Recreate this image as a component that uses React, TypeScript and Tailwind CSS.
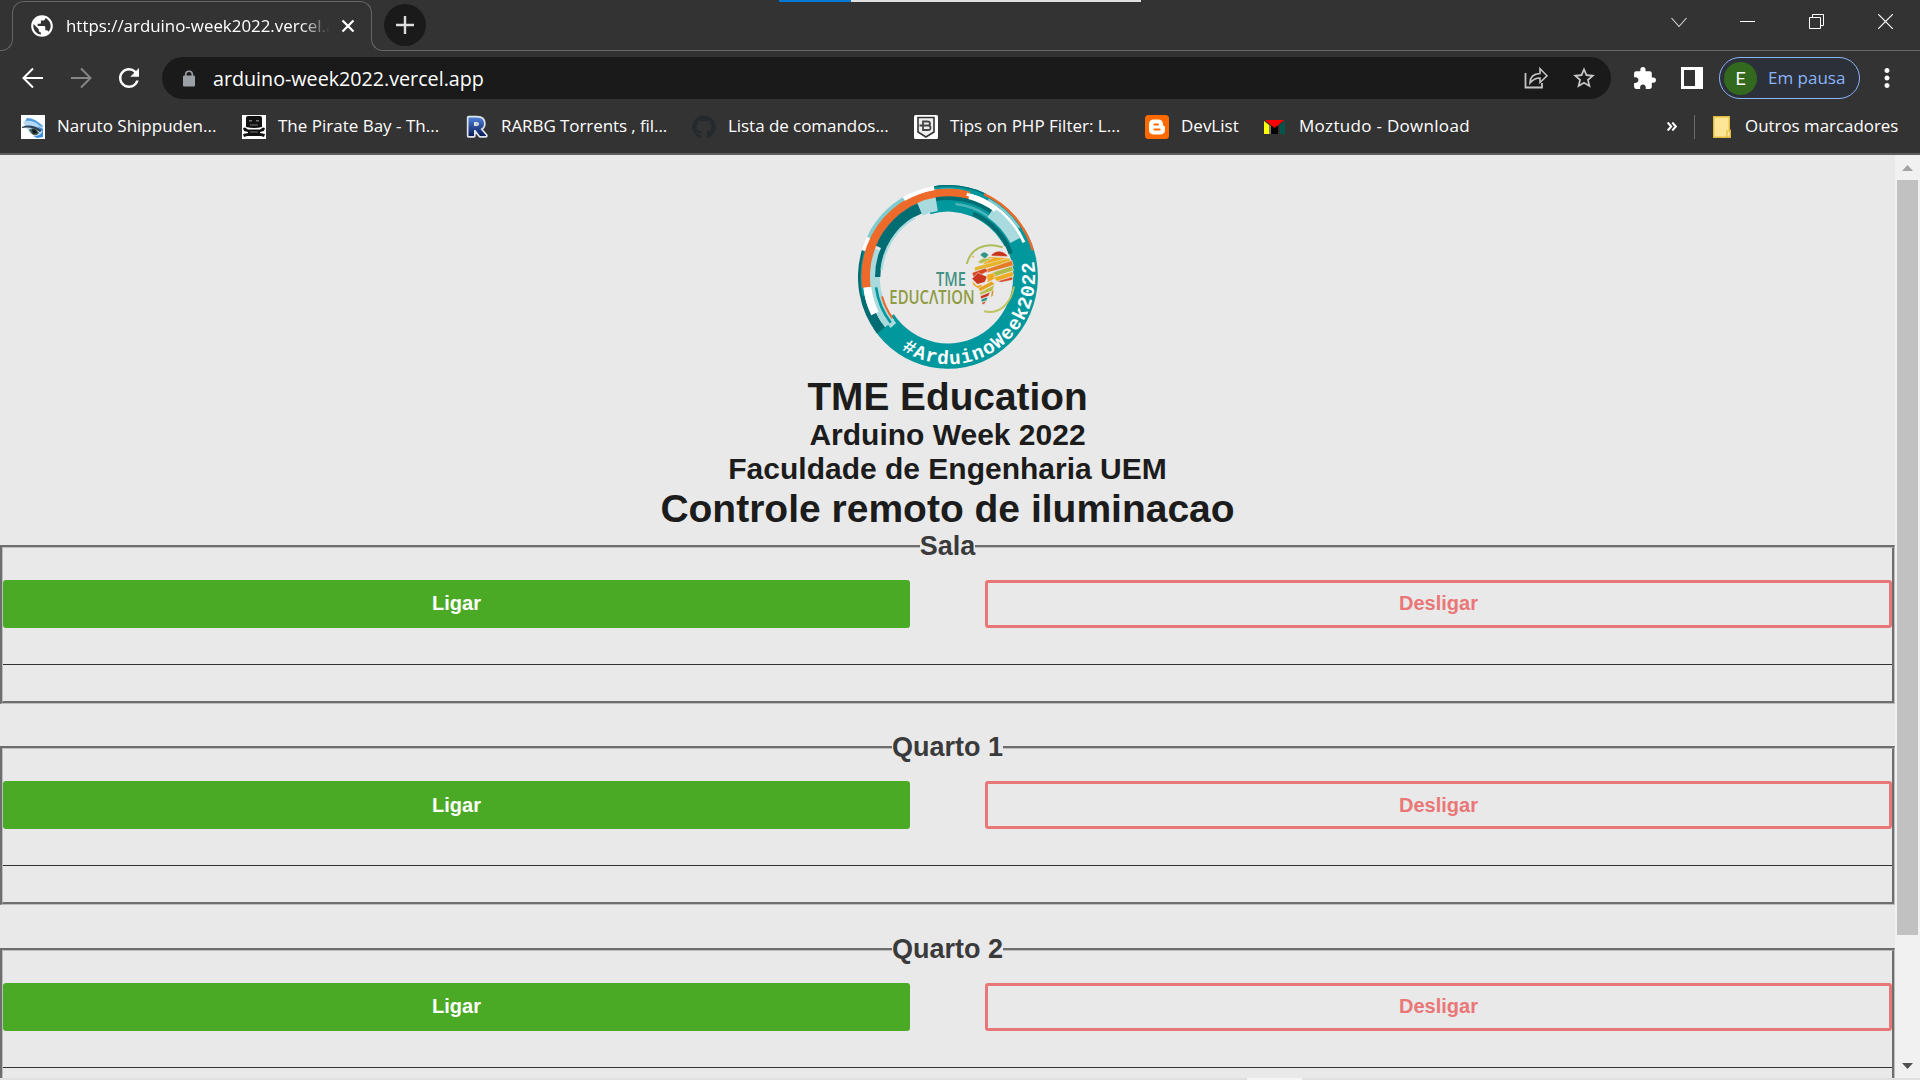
import React from 'react';
import { MdExtension, MdMoreVert, MdPublic, MdRefresh, MdStarBorder } from 'react-icons/md';
import { FaGithub } from 'react-icons/fa';

const RY = 1.022;

/** Closed ring segment; angles are degrees clockwise from twelve o'clock. */
function ring(from: number, to: number, inner: number, outer: number): string {
  const at = (deg: number, r: number) => {
    const a = (deg * Math.PI) / 180;
    return `${(324 + r * Math.sin(a)).toFixed(1)} ${(321 - r * RY * Math.cos(a)).toFixed(1)}`;
  };
  const large = to - from > 180 ? 1 : 0;
  return `M${at(from, outer)}A${outer} ${outer * RY} 0 ${large} 1 ${at(to, outer)}L${at(to, inner)}A${inner} ${inner * RY} 0 ${large} 0 ${at(from, inner)}Z`;
}

const TEAL = '#00979d';
const DARK = '#006d72';
const PALE = '#a9dade';
const MID = '#7fcbcd';
const ORANGE = '#ee6a2a';

const segments: [number, number, number, number, string][] = [
  [10, 62, 192, 268, TEAL],
  [58, 236, 196, 270, TEAL],
  [344, 418, 192, 246, TEAL],
  [232, 287, 256, 270, DARK],
  [232, 250, 240, 258, DARK],
  [258, 287, 256, 263, TEAL],
  [287, 296, 257, 270, '#ffffff'],
  [296, 330, 250, 270, MID],
  [232, 250, 205, 240, PALE],
  [246, 291, 204, 238, PALE],
  [229, 238, 206, 228, PALE],
  [232, 262, 214, 222, TEAL],
  [244, 263, 232, 256, '#ffffff'],
  [263, 375, 234, 260, ORANGE],
  [330, 351, 258, 270, '#ffffff'],
  [351, 384, 260, 270, TEAL],
  [351, 385, 266, 270, DARK],
  [293, 339, 213, 235, DARK],
  [270, 339, 203, 219, DARK],
  [276, 330, 197, 204, PALE],
  [337, 351, 196, 236, PALE],
  [351, 395, 226, 237, DARK],
  [6, 34, 212, 219, '#4db5b9'],
  [34, 62, 212, 246, PALE],
  [22, 70, 194, 207, DARK],
  [375, 396, 237, 254, '#ffffff'],
  [13, 66, 245, 254, '#ffffff'],
  [28, 56, 254, 261, MID],
  [24, 73, 263, 270, ORANGE],
  [234, 254, 203, 209, ORANGE],
];

function Logo() {
  return (
    <svg className="h-[184px] w-[180px]" viewBox="54 45 540 552" preserveAspectRatio="none">
      {segments.map(([a, b, i, o, fill], n) => (
        <path key={n} d={ring(a, b, i, o)} fill={fill} />
      ))}
      <path id="baseline" d="M185 538 A257 262.6 0 0 0 573 240" fill="none" />
      <text fill="#fff" fontSize="58" letterSpacing="3.300" fontFamily="'Liberation Mono', monospace">
        <textPath href="#baseline">#ArduinoWeek2022</textPath>
      </text>
      <g fontFamily="'Open Sans', sans-serif" fontSize="57" fontWeight="600">
        <text x="288" y="347" fill="#429183" textLength="90" lengthAdjust="spacingAndGlyphs">TME</text>
        <text x="148" y="403" fill="#8f9c43" textLength="256" lengthAdjust="spacingAndGlyphs">EDUCΛTION</text>
      </g>
      <g fill="none" strokeWidth="6">
        <path d="M380 282C392 238 430 214 488 232" stroke="#aebd5a" />
        <path d="M432 424C476 434 512 404 522 350" stroke="#bfc45c" />
      </g>
      <g stroke="#e9e9e9" strokeWidth="1.800">
        <path d="M420 255q12-18 26 0l-11 12z" fill="#2f9488" />
        <path d="M394 256l9 2-3 8z" fill="#e8a11c" />
        <path d="M453 254q24-22 48 0l2 6-48-2z" fill="#c9361d" />
        <path d="M446 260l56 3 9 11-70 18-16-4z" fill="#f0a81c" />
        <path d="M412 277l16-12 30 0-34 16z" fill="#b7bf48" />
        <path d="M404 291l102-27 10 12-112 27z" fill="#e6b428" />
        <path d="M440 297l76-26 4 16-82 22z" fill="#e77b25" />
        <path d="M396 308l40-14 8 9-42 24z" fill="#d84a22" />
        <path d="M454 308l62-20 5 14-62 20z" fill="#aebb48" />
        <path d="M396 326l18-18 28 12-8 17-22 6z" fill="#c9361d" />
        <path d="M440 314l20-6 8 16-25 14z" fill="#f0a81c" />
        <path d="M461 322l57-18 3 14-50 17z" fill="#edaa22" />
        <path d="M470 334l48-14 0 10-34 7z" fill="#d84a22" />
        <path d="M398 334l13 13 13-4 4 9-15 3-15-11z" fill="#efa51f" />
        <path d="M415 354l40-20 10 8-45 23z" fill="#e8a11c" />
        <path d="M418 368l46-24-6 18-37 13z" fill="#b7bf48" />
        <path d="M421 378l30-12-6 13-22 8z" fill="#c9361d" />
        <path d="M423 388l21-8-4 12-15 5z" fill="#2f9488" />
        <path d="M425 398l14-6-6 11h-6z" fill="#d84a22" />
        <path d="M455 364l7-8-3 21-7 6z" fill="#d88a22" />
      </g>
    </svg>
  );
}

function NarutoIcon() {
  return (
    <svg width="24" height="24" viewBox="0 0 24 24">
      <path d="M0 0h24v24H0z" fill="#fbfdff" />
      <path d="M2 7q8-5 20 3v12q-8 1-14-5z" fill="#b5d8f4" />
      <path d="M6 3q9 0 16 9l-3-1Q13 5 4 6z" fill="#4e9be0" />
      <path d="M1 12q8-4 20 3l-2 2q-8-6-18-4z" fill="#2d4156" />
      <path d="M8 15q5-4 10 3-3 4-7 1z" fill="#4a5c48" />
      <path d="M11 14l4 1 1 3-4 1z" fill="#101820" />
      <path d="M12 21q7 1 10-5v6l-6 1zM16 11l6 3v3z" fill="#3c8ddb" />
    </svg>
  );
}

function PirateIcon() {
  return (
    <svg width="24" height="24" viewBox="0 0 24 24">
      <path d="M0 0h24v24H0z" fill="#fff" />
      <path d="M4 3q0-2 2-2h12q2 0 2 2v9q-8 2-16 0zM1 13l2-.5 3 2h12l3-2 2 .5-1 3-4 1v1l5 1-1 3-3-1H5l-3 1-1-3 5-1v-1l-4-1z" fill="#111" />
      <path d="M7 5h3v1.500H7zM14 5h3v1.500h-3zM8 9.500h8v1H8zM8 16.500h8v1H8z" fill="#777" />
    </svg>
  );
}

function RarbgIcon() {
  return (
    <svg width="24" height="24" viewBox="0 0 24 24">
      <defs>
        <linearGradient id="rblue" x1="0" y1="0" x2="0" y2="1">
          <stop offset="0" stopColor="#4f7fd6" />
          <stop offset="1" stopColor="#0a1c5c" />
        </linearGradient>
      </defs>
      <path
        d="M3.500 2.500H12q7 0 7 6 0 4-3.500 5.500L21 20.500v.5h-6l-4.500-6H9v6H3.500zM9 7v4h2.500q2.500 0 2.500-2t-2.500-2z"
        fill="url(#rblue)"
        stroke="#dfe3ea"
        strokeWidth="3.400"
        strokeLinejoin="round"
        paintOrder="stroke"
        fillRule="evenodd"
      />
    </svg>
  );
}

function ShieldIcon() {
  return (
    <svg width="24" height="24" viewBox="0 0 24 24">
      <rect width="24" height="24" rx="1.5" fill="#fff" />
      <path d="M4 2.500h16V17l-8 5-8-5z" fill="#eee" stroke="#333" strokeWidth="1.600" />
      <path d="M9 6.500h4.500q2.500 0 2.500 2t-2 2q2.500 0 2.500 2.300t-2.500 2.200H9zM9 10.500h5M5.500 10.500H9" fill="none" stroke="#444" strokeWidth="1.800" />
    </svg>
  );
}

function BloggerIcon() {
  return (
    <svg width="24" height="24" viewBox="0 0 24 24">
      <rect width="24" height="24" rx="3.500" fill="#ff6a00" />
      <path d="M9 4.500h4q5 0 5 5 0 1.500 1 1.500 1 0 1 1.500v2q0 5-5 5H9q-5 0-5-5v-5q0-5 5-5z" fill="#fff" />
      <path d="M9.500 9.500h3.500M9.500 14.500h5" stroke="#ff6a00" strokeWidth="2.200" strokeLinecap="round" />
    </svg>
  );
}

function MoztudoIcon() {
  return (
    <svg width="24" height="24" viewBox="0 0 24 24">
      <path d="M1 6l5 4v9H1z" fill="#ff0" />
      <path d="M6 10l2 1v8H6z" fill="#777" />
      <path d="M8 11h7v8H8z" fill="#050505" />
      <path d="M22 6l-5 4v9h5z" fill="#00564b" />
      <path d="M2 5h19l-9.500 8z" fill="#f00" />
    </svg>
  );
}

const bookmarks: { label: string; icon: React.ReactNode; box: string }[] = [
  { label: 'Naruto Shippuden...', icon: <NarutoIcon />, box: 'w-[221px]' },
  { label: 'The Pirate Bay - Th...', icon: <PirateIcon />, box: 'w-[223px]' },
  { label: 'RARBG Torrents , fil...', icon: <RarbgIcon />, box: 'w-[227px] tracking-[-0.08px]' },
  { label: 'Lista de comandos...', icon: <FaGithub className="size-6 text-[#24292e]" />, box: 'w-[222px] tracking-[-0.05px]' },
  { label: 'Tips on PHP Filter: L...', icon: <ShieldIcon />, box: 'w-[231px]' },
  { label: 'DevList', icon: <BloggerIcon />, box: 'w-[118px]' },
  { label: 'Moztudo - Download', icon: <MoztudoIcon />, box: 'w-[220px] tracking-[0.3px]' },
];

function Slot({ children }: { children: React.ReactNode }) {
  return <div className="flex h-full w-12 shrink-0 items-center justify-center">{children}</div>;
}

function TabStrip() {
  return (
    <div className="relative flex h-[51px] items-end">
      <div className="absolute left-[779px] top-0 flex h-[2px] w-[362px] bg-[#e1e1e1]">
        <div className="w-[72px] bg-[#0078d4]" />
      </div>
      <div className="h-3 w-[13px] rounded-br-[12px] border-b border-r border-[#666]" />
      <div className="-ml-px h-[50px] w-[360px]">
        <div className="flex h-[39px] items-center rounded-t-[12px] border-x border-t border-[#666] pl-[16px]">
          <MdPublic className="mt-[10px] size-[26px] shrink-0 text-white" />
          <div className="ml-[11px] mt-[10px] w-[265px] overflow-hidden whitespace-nowrap text-[16.9px] text-white [mask-image:linear-gradient(to_right,#000_235px,transparent_264px)]">
            https://arduino-week2022.vercel.a
          </div>
          <svg className="ml-[10px] mt-[10px] shrink-0" width="14" height="14" viewBox="0 0 14 14">
            <path d="M1.500 1.500l11 11M12.500 1.500l-11 11" stroke="#fff" strokeWidth="2.200" />
          </svg>
        </div>
      </div>
      <div className="-ml-px flex h-full flex-1 items-end">
        <div className="h-3 flex-1 rounded-bl-[12px] border-b border-l border-[#666]" />
      </div>
      <div className="absolute left-[384px] top-[4px] flex size-[42px] items-center justify-center rounded-full bg-[#1a1a1a]">
        <svg width="18" height="18" viewBox="0 0 18 18">
          <path d="M9 0v18M0 9h18" stroke="#ddd" strokeWidth="2.400" />
        </svg>
      </div>
      <div className="absolute right-0 top-0 flex h-[43px] items-center">
        <div className="flex w-[69px] justify-center">
          <svg width="16" height="16" viewBox="0 0 16 16" fill="none" stroke="#ddd" strokeWidth="1.100">
            <path d="M.5 4l7.500 8.500L15.500 4" />
          </svg>
        </div>
        <div className="flex w-[69px] justify-center">
          <div className="h-px w-[15px] bg-white" />
        </div>
        <div className="flex w-[69px] justify-center">
          <svg width="15" height="15" viewBox="0 0 15 15" fill="none" stroke="#fff">
            <path d="M.5 3.500h11v11H.5zM3.500 3.500v-3h11v11h-3" />
          </svg>
        </div>
        <div className="flex w-[69px] justify-center">
          <svg width="15" height="15" viewBox="0 0 15 15" stroke="#fff" strokeWidth="1.200">
            <path d="M0 0l15 15M15 0L0 15" />
          </svg>
        </div>
      </div>
    </div>
  );
}

function Toolbar() {
  return (
    <div className="mt-[6px] flex h-[42px] items-center pl-[9px]">
      <Slot>
        <svg width="22" height="22" viewBox="0 0 22 22" fill="none" stroke="#fff" strokeWidth="2">
          <path d="M21 11H2M11 1.500L1.500 11l9.500 9.500" />
        </svg>
      </Slot>
      <Slot>
        <svg width="22" height="22" viewBox="0 0 22 22" fill="none" stroke="#868686" strokeWidth="2">
          <path d="M1 11h19M11 1.500l9.500 9.500-9.500 9.500" />
        </svg>
      </Slot>
      <Slot>
        <MdRefresh className="size-[30px] text-white" />
      </Slot>
      <div className="ml-[9px] flex h-full w-[1449px] items-center rounded-full bg-[#1a1a1a] pl-[15px] pr-[3px]">
        <div className="flex w-6 justify-center">
          <svg width="12" height="17" viewBox="0 0 12 17">
            <path d="M2.700 7V4.500a3.300 3.300 0 0 1 6.600 0V7" fill="none" stroke="#9aa0a6" strokeWidth="1.600" />
            <rect y="5.500" width="12" height="11" rx="1.300" fill="#9aa0a6" />
          </svg>
        </div>
        <div className="ml-3 flex-1 pt-px text-[19.7px] text-white">arduino-week2022.vercel.app</div>
        <Slot>
          <svg width="24" height="24" viewBox="0 0 24 24" fill="none" stroke="#c4c4c4" strokeWidth="1.800">
            <path d="M1.500 7v14.500h16.500V17" />
            <path d="M6 17q0-9 10-9.500V2.800l7 7-7 6.700v-4.500q-6 0-10 5z" strokeWidth="1.600" />
          </svg>
        </Slot>
        <Slot>
          <MdStarBorder className="size-[26px] text-[#c8c8c8]" />
        </Slot>
      </div>
      <div className="ml-[9px] flex h-full">
        <Slot>
          <MdExtension className="size-[25px] text-white" />
        </Slot>
        <Slot>
          <div className="h-[22px] w-[22px] border-[3px] border-r-8 border-white" />
        </Slot>
      </div>
      <div className="ml-[3px] flex h-[42px] w-[141px] items-center rounded-full border-[1.500px] border-[#8ab4f8] bg-[#2c3038] pl-[4px]">
        <div className="flex size-[33px] items-center justify-center rounded-full bg-[#33691e] font-['Roboto'] text-[18px] text-white">
          E
        </div>
        <div className="ml-[11px] whitespace-nowrap text-[17px] text-[#8ab4f8]">Em pausa</div>
      </div>
      <div className="ml-[3px] h-full">
        <Slot>
          <MdMoreVert className="size-[30px] text-white" />
        </Slot>
      </div>
    </div>
  );
}

function BookmarksBar() {
  return (
    <div className="flex h-[54px] items-center border-b-2 border-[#5e5e5e] pl-[21px] text-[17px] text-white">
      {bookmarks.map((b) => (
        <div key={b.label} className={`${b.box} flex shrink-0 items-center gap-3 whitespace-nowrap`}>
          <div className="flex size-6 shrink-0 items-center justify-center">{b.icon}</div>
          <span className="pb-[2px]">{b.label}</span>
        </div>
      ))}
      <div className="ml-[184px] flex items-center">
        <svg width="10" height="9" viewBox="0 0 10 9" fill="none" stroke="#fff" strokeWidth="2">
          <path d="M.7.500l3.500 4-3.500 4M5.300.500l3.500 4-3.500 4" />
        </svg>
        <div className="ml-[17px] h-6 w-px bg-[#6b6b6b]" />
        <svg className="ml-[18px]" width="18" height="22" viewBox="0 0 18 22">
          <path d="M.7.700h15.600v13.600h1v7H.7z" fill="#ffe596" stroke="#e0bb3c" strokeWidth="1.400" />
          <path d="M14 21v-6h3" fill="none" stroke="#e0bb3c" strokeWidth="1.200" />
        </svg>
        <span className="ml-[14px] whitespace-nowrap pb-[2px] text-[16.900px]">Outros marcadores</span>
      </div>
    </div>
  );
}

function Room({ name, gap, labelPad }: { name: string; gap: string; labelPad: string }) {
  return (
    <section className={`${gap} flex shrink-0 flex-col items-stretch`}>
      <h3 className="relative z-10 h-[31px] self-center bg-[#e9e9e9] text-[27px] font-bold leading-[31px] text-[#3a3a3a]">
        {name}
      </h3>
      <div className="-mt-[17px] border-b border-l-2 border-r border-t-2 border-b-[#bdbdbd] border-l-[#6e6e6e] border-r-[#bdbdbd] border-t-[#6e6e6e]">
        <div className="h-[156px] border-b-2 border-l border-r-2 border-t border-b-[#6e6e6e] border-l-[#bdbdbd] border-r-[#6e6e6e] border-t-[#bdbdbd] pt-8">
          <div className="grid grid-cols-2 gap-[75px] text-[20px] font-bold">
            <button className={`${labelPad} h-12 rounded-[3px] bg-[#4aaa26] text-white`}>Ligar</button>
            <button className={`${labelPad} h-12 rounded-[3px] border-[3px] border-[#ea7777] text-[#ea7777]`}>
              Desligar
            </button>
          </div>
          <div className="mt-9 h-px bg-[#333]" />
        </div>
      </div>
    </section>
  );
}

function Scrollbar() {
  return (
    <div className="flex w-[25px] flex-col items-center bg-[#f1f1f1]">
      <div className="flex h-[25px] items-center">
        <svg width="11" height="6" viewBox="0 0 11 6">
          <path d="M5.500 0L11 6H0z" fill="#a3a3a3" />
        </svg>
      </div>
      <div className="h-[755px] w-[21px] bg-[#c1c1c1]" />
      <div className="flex-1" />
      <div className="flex h-[25px] items-center">
        <svg width="11" height="6" viewBox="0 0 11 6">
          <path d="M5.500 6L11 0H0z" fill="#505050" />
        </svg>
      </div>
    </div>
  );
}

export default function App() {
  return (
    <div className="flex h-[1080px] w-[1920px] flex-col overflow-hidden bg-[#333333] font-['Open_Sans',sans-serif]">
      <header className="h-[155px] shrink-0">
        <TabStrip />
        <Toolbar />
        <div className="h-[2px]" />
        <BookmarksBar />
      </header>
      <div className="flex h-[923px] shrink-0 overflow-hidden">
        <main className="flex w-[1895px] flex-col overflow-hidden bg-[#e9e9e9] pt-[30px] font-['Liberation_Sans',Arial,sans-serif] text-[#1c1c1c]">
          <div className="flex shrink-0 flex-col items-center font-bold">
            <Logo />
            <h1 className="mt-[6px] text-[38.800px] leading-[44px]">TME Education</h1>
            <h2 className="-mt-px text-[30px] leading-[34px]">Arduino Week 2022</h2>
            <h2 className="text-[30px] leading-[34px]">Faculdade de Engenharia UEM</h2>
            <h1 className="mt-px text-[39px] leading-[44px]">Controle remoto de iluminacao</h1>
          </div>
          <Room name="Sala" gap="mt-0" labelPad="pb-[2px]" />
          <Room name="Quarto 1" gap="mt-[28px]" labelPad="pb-0" />
          <Room name="Quarto 2" gap="mt-[29px]" labelPad="pb-[2px]" />
        </main>
        <Scrollbar />
      </div>
      <footer className="h-[2px] shrink-0 bg-[#e0e0e0] pl-[1247px]">
        <div className="h-full w-[55px] bg-[#f4f4f4]" />
      </footer>
    </div>
  );
}
